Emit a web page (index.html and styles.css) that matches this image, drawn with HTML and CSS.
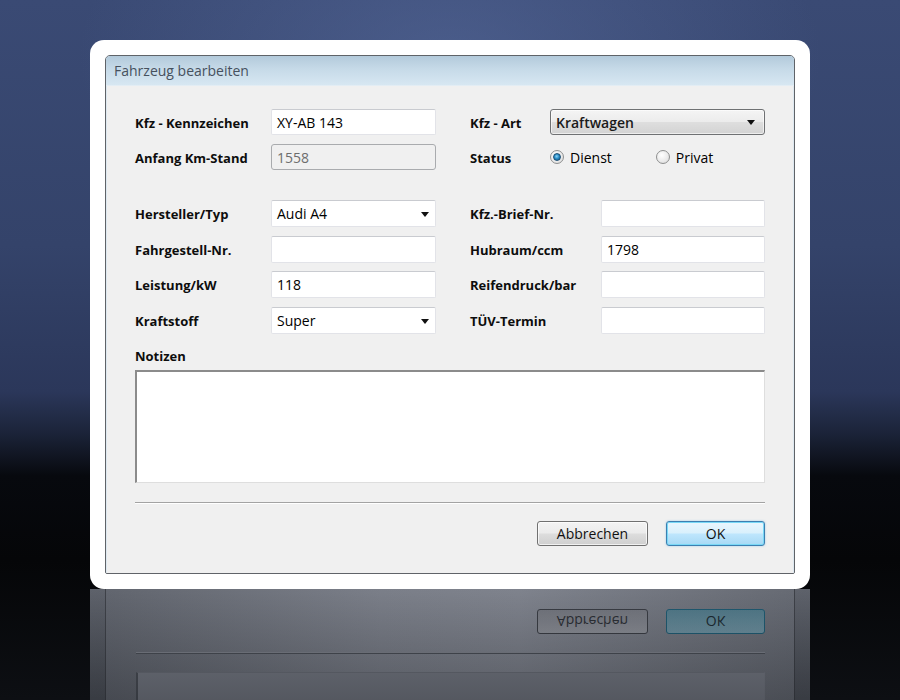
FILE: index.html
```html
<!DOCTYPE html>
<html lang="de">
<head>
<meta charset="utf-8">
<title>Fahrzeug bearbeiten</title>
<link rel="stylesheet" href="styles.css">
</head>
<body>
<div class="stage">
  <div class="frame">
    <div class="window">
      <div class="titlebar">Fahrzeug bearbeiten</div>
      <div class="content">
        <div class="grid g1">
          <div class="label">Kfz - Kennzeichen</div>
          <div class="field">XY-AB 143</div>
          <div></div>
          <div class="label">Kfz - Art</div>
          <div class="combo">Kraftwagen<span class="arrow"></span></div>

          <div class="label">Anfang Km-Stand</div>
          <div class="field disabled">1558</div>
          <div></div>
          <div class="label">Status</div>
          <div class="radios">
            <span class="radio checked"><span class="dot"></span></span><span class="rtext">Dienst</span>
            <span class="radio second"></span><span class="rtext">Privat</span>
          </div>
        </div>

        <div class="grid g2">
          <div class="label">Hersteller/Typ</div>
          <div class="field select">Audi A4<span class="arrow"></span></div>
          <div></div>
          <div class="label">Kfz.-Brief-Nr.</div>
          <div class="field"></div>

          <div class="label">Fahrgestell-Nr.</div>
          <div class="field"></div>
          <div></div>
          <div class="label">Hubraum/ccm</div>
          <div class="field">1798</div>

          <div class="label">Leistung/kW</div>
          <div class="field">118</div>
          <div></div>
          <div class="label">Reifendruck/bar</div>
          <div class="field"></div>

          <div class="label">Kraftstoff</div>
          <div class="field select">Super<span class="arrow"></span></div>
          <div></div>
          <div class="label">TÜV-Termin</div>
          <div class="field"></div>
        </div>

        <div class="label notes-label">Notizen</div>
        <div class="notes"></div>
        <div class="sep"></div>
        <div class="buttons">
          <div class="btn">Abbrechen</div>
          <div class="btn ok">OK</div>
        </div>
      </div>
    </div>
  </div>
  <div class="reflection">
    <div class="rwin">
      <div class="rbuttons">
        <div class="rbtn"><span class="flip">Abbrechen</span></div>
        <div class="rbtn rok"><span class="flip">OK</span></div>
      </div>
      <div class="rsep"></div>
      <div class="rnotes"></div>
    </div>
    <div class="rfade"></div>
  </div>
</div>
</body>
</html>
```
FILE: styles.css
```css
* { box-sizing: border-box; }
html, body { margin: 0; padding: 0; }
body {
  font-family: "Open Sans", "Noto Sans", "DejaVu Sans", sans-serif;
  background: #000;
}
.stage {
  width: 900px;
  height: 700px;
  overflow: hidden;
  position: relative;
  display: flex;
  flex-direction: column;
  background:
    radial-gradient(ellipse 55% 40% at 50% 8%, rgba(88,108,158,0.55), rgba(88,108,158,0) 75%),
    radial-gradient(ellipse 45% 14% at 50% 92%, rgba(80,84,94,0.55), rgba(80,84,94,0) 80%),
    linear-gradient(to bottom, #3a4a74 0%, #34436a 35%, #2b375a 56%, #1b2338 62%, #07090e 68%, #050608 80%, #0d0f13 100%);
}
.frame {
  margin: 40px 0 0 90px;
  width: 720px;
  height: 549px;
  padding: 15px;
  background: #fff;
  border-radius: 14px;
  flex: none;
  position: relative;
  z-index: 2;
}
.window {
  height: 519px;
  border: 1px solid #5f6368;
  border-radius: 5px 5px 2px 2px;
  background: #f0f0f0;
  display: flex;
  flex-direction: column;
  overflow: hidden;
}
.titlebar {
  height: 30px;
  flex: none;
  background: linear-gradient(to bottom, #b3cadb 0%, #c6dae8 45%, #d7e7f2 100%);
  color: #46515e;
  font-size: 14px;
  line-height: 30px;
  padding-left: 8px;
  border-bottom: 1px solid #e3edf4;
}
.content {
  padding: 23px 28px 0 28px;
  flex: 1;
  border-left: 1px solid #dde8f0;
  border-right: 1px solid #dde8f0;
}
.grid {
  display: grid;
  align-items: center;
}
.g1 {
  grid-template-columns: 136px 165px 34px 80px 215px;
  grid-template-rows: 26px 26px;
  row-gap: 9px;
}
.g2 {
  margin-top: 30px;
  grid-template-columns: 136px 165px 34px 131px 164px;
  grid-template-rows: repeat(4, 27px);
  row-gap: 8.7px;
}
.label {
  font-size: 13px;
  font-weight: 700;
  color: #0d0d0d;
  white-space: nowrap;
  padding-top: 1px;
}
.field {
  height: 100%;
  background: #fff;
  border: 1px solid #e2e3e8;
  border-top-color: #c9cbd0;
  border-radius: 2px;
  font-size: 14px;
  color: #000;
  padding-left: 5px;
  display: flex;
  align-items: center;
  position: relative;
}
.field.disabled {
  background: #f0f0f0;
  border: 1px solid #a9abae;
  border-radius: 3px;
  color: #6d6d6d;
}
.arrow {
  position: absolute;
  top: 50%;
  margin-top: -2px;
  right: 6px;
  width: 0;
  height: 0;
  border-left: 4px solid transparent;
  border-right: 4px solid transparent;
  border-top: 5px solid #111;
}
.combo {
  height: 100%;
  border: 1px solid #6f7173;
  border-radius: 3px;
  background: linear-gradient(to bottom, #f4f4f4 0%, #ececec 48%, #dedede 52%, #d3d3d3 100%);
  font-size: 14px;
  font-weight: 600;
  color: #1a1a1a;
  padding-left: 5px;
  display: flex;
  align-items: center;
  position: relative;
  box-shadow: inset 0 0 0 1px rgba(255,255,255,0.6);
}
.combo .arrow { right: 9px; }
.radios {
  display: flex;
  align-items: center;
  font-size: 14px;
  color: #000;
}
.radio {
  width: 14px;
  height: 14px;
  border-radius: 50%;
  border: 1px solid #8e8f8f;
  background: radial-gradient(circle at 40% 35%, #ffffff 0%, #e9e9e9 60%, #d2d2d2 100%);
  display: flex;
  align-items: center;
  justify-content: center;
  flex: none;
}
.radio.second { margin-left: 44px; }
.dot {
  width: 8px;
  height: 8px;
  border-radius: 50%;
  background: radial-gradient(circle at 45% 40%, #8fd3f5 0%, #2a8fc8 45%, #0d4d7a 100%);
  border: 1px solid #1a4e74;
}
.rtext { margin-left: 6px; }
.notes-label { margin-top: 13px; line-height: 16px; }
.notes {
  margin-top: 6px;
  height: 113px;
  background: #fff;
  border-top: 2px solid #8b8b8b;
  border-left: 2px solid #8b8b8b;
  border-right: 1px solid #dedede;
  border-bottom: 1px solid #dedede;
}
.sep {
  margin-top: 19px;
  height: 2px;
  border-top: 1px solid #a3a3a3;
  border-bottom: 1px solid #ffffff;
}
.buttons {
  margin-top: 17px;
  display: flex;
  justify-content: flex-end;
  gap: 18px;
}
.btn {
  width: 111px;
  height: 25px;
  border: 1px solid #707070;
  border-radius: 3px;
  background: linear-gradient(to bottom, #f3f3f3 0%, #ebebeb 48%, #dddddd 52%, #cfcfcf 100%);
  box-shadow: inset 0 0 0 1px rgba(255,255,255,0.7);
  font-size: 14px;
  color: #111;
  display: flex;
  align-items: center;
  justify-content: center;
}
.btn.ok {
  width: 99px;
  border-color: #3c7fb1;
  background: linear-gradient(to bottom, #eaf6fd 0%, #d9f0fc 48%, #bee6fd 52%, #a7d9f5 100%);
  box-shadow: inset 0 0 0 1px #79d8f6, 0 0 2px rgba(60,160,220,0.5);
}
.reflection {
  margin-left: 90px;
  width: 720px;
  flex: 1;
  position: relative;
  background: linear-gradient(to bottom, #5e626b 0%, #4c5058 100%);
  padding: 0 15px;
}
.rwin {
  height: 100%;
  border-left: 1px solid #3e4148;
  border-right: 1px solid #3e4148;
  background: linear-gradient(to right, #62666f 0%, #7b7f89 40%, #7f838d 60%, #676b74 100%);
  padding: 20px 29px 0 30px;
}
.rbuttons {
  display: flex;
  justify-content: flex-end;
  gap: 18px;
}
.rbtn {
  width: 111px;
  height: 25px;
  border: 1px solid #3a3d44;
  border-radius: 3px;
  background: linear-gradient(to top, #8a8d95 0%, #7e8189 50%, #74777f 100%);
  font-size: 14px;
  color: #2c2f35;
  display: flex;
  align-items: center;
  justify-content: center;
}
.rbtn.rok {
  width: 99px;
  border-color: #1f5b72;
  background: linear-gradient(to top, #6c8f9e 0%, #5f8594 50%, #527a8a 100%);
  color: #1c2a31;
}
.flip { display: inline-block; transform: scaleY(-1); }
.rsep {
  margin-top: 18px;
  height: 2px;
  border-top: 1px solid #7e828b;
  border-bottom: 1px solid #4a4e56;
}
.rnotes {
  margin-top: 18px;
  height: 40px;
  border-top: 1px solid #6b6f78;
  border-left: 2px solid #4b4f57;
  border-right: 1px solid #757983;
  background: #777b85;
}
.rfade {
  position: absolute;
  inset: 0;
  background: linear-gradient(to bottom, rgba(0,0,0,0) 0%, rgba(10,12,16,0.35) 100%);
  pointer-events: none;
}
```
